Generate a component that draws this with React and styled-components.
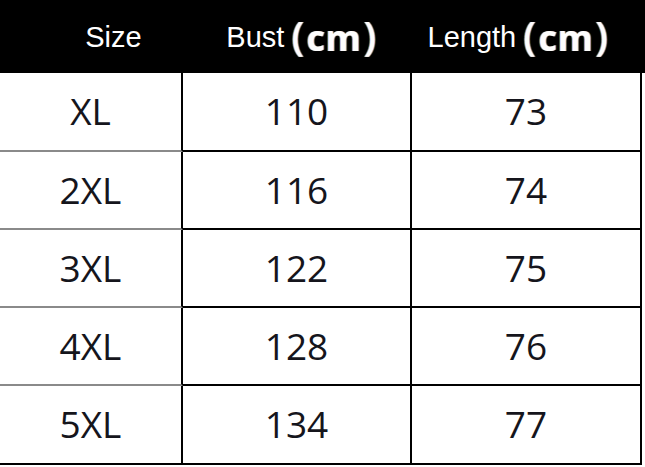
import React from "react";
import styled, { createGlobalStyle } from "styled-components";

const GlobalStyle = createGlobalStyle`
  html, body { margin: 0; padding: 0; background: #ffffff; }
  body { width: 645px; height: 467px; overflow: hidden; }
`;

const COLS = "183px 229px 230px 3px";

const Table = styled.div`
  width: 645px;
  display: flex;
  flex-direction: column;
`;

const HeaderRow = styled.div`
  height: 73px;
  background: #000;
  display: grid;
  grid-template-columns: ${COLS};
`;

const HeaderCell = styled.div`
  display: flex;
  align-items: center;
  justify-content: center;
  transform: translateX(${(p) => p.$shift || 0}px);
  color: #fff;
  font-family: "Liberation Sans", Arial, sans-serif;
  font-size: 29px;
  white-space: nowrap;
  padding-top: 1px;
`;

const Unit = styled.span`
  font-family: "Open Sans", "Noto Sans", sans-serif;
  font-weight: 700;
  font-size: 36px;
  margin-left: 5px;
  letter-spacing: 0.5px;
  display: inline-flex;
  align-items: center;
  color: #fdfdfd;
  text-shadow: -1px 0 0 rgba(255, 170, 60, 0.7), 1px 0 0 rgba(90, 170, 255, 0.7);
`;

const Paren = styled.span`
  font-weight: 600;
  font-size: 40px;
  margin: 0 ${(p) => p.$gap || 0}px;
  position: relative;
  top: -2px;
`;

const BodyRow = styled.div`
  height: ${(p) => p.$h}px;
  display: grid;
  grid-template-columns: ${COLS};
`;

const Cell = styled.div`
  display: flex;
  align-items: center;
  justify-content: center;
  box-sizing: border-box;
  border-bottom: 2px solid ${(p) => (p.$light ? "#8a8a8a" : "#000")};
  border-right: 2px solid #000;
  font-family: "Open Sans", "Noto Sans", sans-serif;
  font-size: 37px;
  color: #15151c;
  padding-bottom: 2px;
`;

const Spacer = styled.div``;

const rows = [
  ["XL", "110", "73", 79],
  ["2XL", "116", "74", 78],
  ["3XL", "122", "75", 78],
  ["4XL", "128", "76", 78],
  ["5XL", "134", "77", 79],
];

export default function App() {
  return (
    <>
      <GlobalStyle />
      <Table>
        <HeaderRow>
          <HeaderCell $shift={22}>Size</HeaderCell>
          <HeaderCell $shift={5}>
            Bust
            <Unit>
              <Paren $gap={2}>(</Paren>cm<Paren $gap={2}>)</Paren>
            </Unit>
          </HeaderCell>
          <HeaderCell $shift={-8}>
            Length
            <Unit>
              <Paren $gap={2}>(</Paren>cm<Paren $gap={2}>)</Paren>
            </Unit>
          </HeaderCell>
          <Spacer />
        </HeaderRow>
        {rows.map(([size, bust, len, h], i) => (
          <BodyRow key={size} $h={h}>
            <Cell $light={i < rows.length - 1}>{size}</Cell>
            <Cell>{bust}</Cell>
            <Cell>{len}</Cell>
            <Spacer />
          </BodyRow>
        ))}
      </Table>
    </>
  );
}
